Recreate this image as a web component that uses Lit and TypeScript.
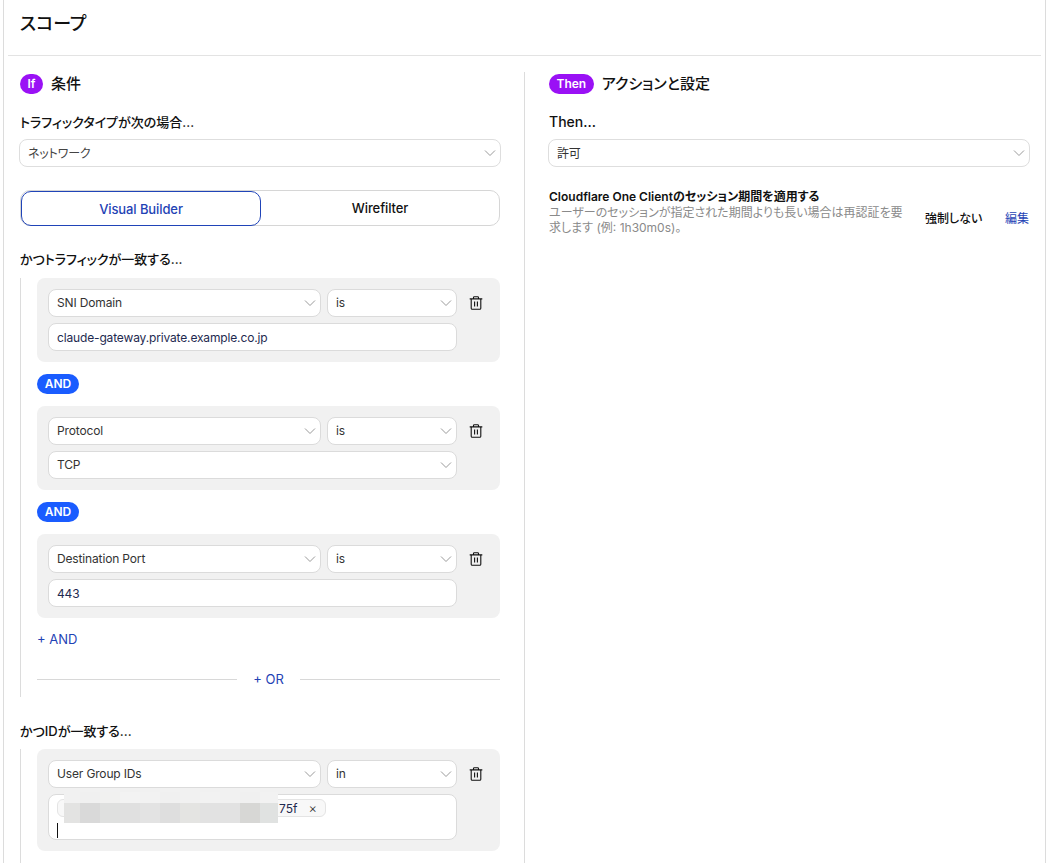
import { LitElement, html, css } from "lit";
import { customElement } from "lit/decorators.js";

const chevron = html`<svg class="chev" width="12" height="12" viewBox="0 0 12 12" fill="none"><path d="M1 3.5 6 8.5 11 3.5" stroke="#9a9a9a" stroke-width="1"/></svg>`;
const trash = html`<svg class="trash" width="14" height="14" viewBox="0 0 14 14" fill="none" stroke="#111" stroke-width="1.1"><path d="M.7 2.9h12.6M2.2 2.9v9.3c0 .7.4 1.1 1.1 1.1h7.4c.7 0 1.1-.4 1.1-1.1V2.9M4.5 2.9V1.6c0-.6.3-.9.9-.9h3.2c.6 0 .9.3.9.9v1.3M5.6 5.6v4.9M8.4 5.6v4.9"/></svg>`;

const blurTop = ["#f1f1f1", "#f0f0f0", "#f1f1f0", "#f3f3f3", "#f2f2f2", "#f0f0f0", "#f1f1f1", "#f2f2f2", "#f1f1f1", "#f0f0f0", "#f2f2f2"];
const blurBottom = ["#e3e3e2", "#d9d9d9", "#dfe0df", "#e0e0e0", "#e3e3e3", "#dedede", "#e4e4e2", "#e2e2e2", "#e2e2e2", "#d7d7d5", "#e0e2e1"];

@customElement("app-root")
export class AppRoot extends LitElement {
  static styles = css`
    :host {
      display: block;
      height: 863px;
      overflow: hidden;
      font-family: Inter, "Noto Sans CJK JP", sans-serif;
      font-feature-settings: "palt";
      color: #111;
      background: #fff;
      padding: 0 3px;
      box-sizing: border-box;
    }
    * { box-sizing: border-box; }
    .card {
      border-left: 1px solid #dcdcdc;
      border-right: 1px solid #dcdcdc;
      width: 1043px;
      height: 863px;
      padding: 0 4px;
    }
    .head {
      height: 56px;
      border-bottom: 1px solid #e3e3e3;
      padding: 10px 12px 0;
      width: 1033px;
    }
    h1 {
      margin: 0;
      font-size: 18px;
      line-height: 27px;
      font-weight: 500;
    }
    .cols { display: flex; }
    .left { width: 492px; padding: 18px 0 0 12px; flex: none; }
    .right {
      flex: 1;
      margin-left: 24px;
      border-left: 1px solid #dcdcdc;
      height: 807px;
      margin-top: 16px;
      padding: 2px 0 0 24px;
      width: 506px;
    }
    .sec { display: flex; align-items: center; height: 20px; gap: 8px; }
    .badge {
      background: #9a11f5;
      color: #fff;
      font-size: 12px;
      font-weight: 600;
      height: 20px;
      line-height: 20px;
      border-radius: 10px;
      padding: 0 7.5px;
    }
    .sec-title { font-size: 15px; font-weight: 500; line-height: 20px; }
    .label { font-size: 13px; font-weight: 500; line-height: 18px; }
    .sel, .inp {
      display: flex;
      align-items: center;
      justify-content: space-between;
      height: 28px;
      background: #fff;
      border: 1px solid #dedede;
      border-radius: 8px;
      padding: 0 4px 0 8px;
      font-size: 12px;
      letter-spacing: -0.15px;
      color: #333;
    }
    .sel span { position: relative; top: -0.5px; }
    .chev { flex: none; }
    .traffic { margin-top: 19px; }
    .traffic .sel { margin: 8px 0 0 -1px; width: 482px; color: #444; }
    .seg {
      display: flex;
      margin-top: 23px;
      height: 36px;
      width: 480px;
      border: 1px solid #d6d6d6;
      border-radius: 10px;
      font-size: 13px;
      letter-spacing: -0.1px;
      font-weight: 500;
    }
    .seg div { display: flex; align-items: center; justify-content: center; }
    .seg .on {
      width: 240px;
      margin: 0 0 -1px 0;
      height: 35px;
      border: 1px solid #2044b8;
      border-radius: 10px;
      color: #1f43b5;
    }
    .seg .off { flex: 1; }
    .match { margin-top: 24px; }
    .group {
      margin-top: 10px;
      border-left: 1px solid #dcdcdc;
      padding-left: 16px;
      width: 480px;
    }
    .rule {
      background: #f1f1f1;
      border-radius: 8px;
      padding: 11px 0 11px 11px;
      display: grid;
      grid-template-columns: 273px 130px 38px;
      grid-auto-rows: 28px;
      column-gap: 6px;
      row-gap: 6px;
    }
    .rule .sel, .rule .inp { border-color: #dbdbdb; padding-left: 8px; }
    .wide { grid-column: 1 / span 2; }
    .inp.val { color: #1e2a50; }
    .trash-cell { display: flex; align-items: center; justify-content: center; padding-right: 13px; }
    .and {
      display: block;
      width: 42px;
      height: 20px;
      margin: 12px 0;
      background: #1a5cff;
      color: #fff;
      border-radius: 10px;
      text-align: center;
      font-size: 12px;
      line-height: 20px;
      font-weight: 600;
    }
    .add-and {
      margin-top: 13px;
      font-size: 13px;
      line-height: 16px;
      color: #1f43b5;
    }
    .or {
      display: flex;
      align-items: center;
      margin-top: 24px;
      padding-bottom: 10px;
      height: 26px;
      font-size: 13px;
      color: #1f43b5;
    }
    .or i { height: 1px; background: #d8d8d8; flex: 1; }
    .or span { width: 63px; text-align: center; line-height: 16px; }
    .id { margin-top: 25px; }
    .group.last { margin-top: 9px; padding-bottom: 30px; }
    .id-box {
      position: relative;
      height: 46px;
      background: #fff;
      border: 1px solid #dbdbdb;
      border-radius: 8px;
      padding: 4px 8px;
      font-size: 13px;
    }
    .rule.tall { grid-template-rows: 28px 46px; }
    .chip {
      display: flex;
      width: 269px;
      height: 18px;
      justify-content: flex-end;
      align-items: center;
      border: 1px solid #e4e4e4;
      background: #f8f8f8;
      border-radius: 6px;
      padding-right: 8px;
      gap: 11px;
      color: #1e2a50;
      font-size: 12px;
    }
    .x { font-size: 13px; font-weight: 300; color: #333; line-height: 12px; }
    .caret { width: 1px; height: 15px; background: #111; margin-top: 6px; }
    .blur {
      position: absolute;
      left: 15px;
      top: -3px;
      width: 214px;
      height: 31px;
      display: grid;
      grid-template-columns: 16px repeat(9, 20px) 18px;
      grid-template-rows: 11px 20px;
    }
    .then-label { margin-top: 19px; font-size: 14px; }
    .then-sel { margin: 8px 0 0 -1px; width: 482px; color: #333; }
    .setting { display: flex; margin-top: 21px; width: 480px; align-items: center; }
    .s-text { width: 362px; flex: none; }
    .s-title { font-size: 12px; font-weight: 600; line-height: 17px; }
    .s-desc { font-size: 12px; line-height: 15px; color: #8a8a8a; }
    .s-val { margin-left: 14px; font-size: 12px; font-weight: 500; padding-top: 12px; }
    .s-edit { margin-left: auto; font-size: 12px; color: #1f43b5; padding-top: 12px; }
  `;

  private rule(name: string, op: string, value: unknown, mode: "input" | "select") {
    return html`<div class="rule">
      <div class="sel"><span>${name}</span>${chevron}</div>
      <div class="sel"><span>${op}</span>${chevron}</div>
      <div class="trash-cell">${trash}</div>
      ${mode === "input"
        ? html`<div class="inp val wide">${value}</div>`
        : html`<div class="sel wide"><span>${value}</span>${chevron}</div>`}
    </div>`;
  }

  render() {
    return html`<div class="card">
      <div class="head"><h1>スコープ</h1></div>
      <div class="cols">
        <div class="left">
          <div class="sec"><span class="badge">If</span><span class="sec-title">条件</span></div>
          <div class="traffic">
            <div class="label">トラフィックタイプが次の場合...</div>
            <div class="sel"><span>ネットワーク</span>${chevron}</div>
          </div>
          <div class="seg"><div class="on">Visual Builder</div><div class="off">Wirefilter</div></div>
          <div class="match label">かつトラフィックが一致する...</div>
          <div class="group">
            ${this.rule("SNI Domain", "is", "claude-gateway.private.example.co.jp", "input")}
            <span class="and">AND</span>
            ${this.rule("Protocol", "is", "TCP", "select")}
            <span class="and">AND</span>
            ${this.rule("Destination Port", "is", "443", "input")}
            <div class="add-and">+ AND</div>
            <div class="or"><i></i><span>+ OR</span><i></i></div>
          </div>
          <div class="id label">かつIDが一致する...</div>
          <div class="group last">
            <div class="rule tall">
              <div class="sel"><span>User Group IDs</span>${chevron}</div>
              <div class="sel"><span>in</span>${chevron}</div>
              <div class="trash-cell">${trash}</div>
              <div class="id-box wide">
                <div class="chip"><span>75f</span><span class="x">×</span></div>
                <div class="caret"></div>
                <div class="blur">
                  ${blurTop.map((c) => html`<div style="background:${c}"></div>`)}
                  ${blurBottom.map((c) => html`<div style="background:${c}"></div>`)}
                </div>
              </div>
            </div>
          </div>
        </div>
        <div class="right">
          <div class="sec"><span class="badge">Then</span><span class="sec-title">アクションと設定</span></div>
          <div class="then-label label">Then...</div>
          <div class="sel then-sel"><span>許可</span>${chevron}</div>
          <div class="setting">
            <div class="s-text">
              <div class="s-title">Cloudflare One Clientのセッション期間を適用する</div>
              <div class="s-desc">ユーザーのセッションが指定された期間よりも長い場合は再認証を要求します (例: 1h30m0s)。</div>
            </div>
            <div class="s-val">強制しない</div>
            <div class="s-edit">編集</div>
          </div>
        </div>
      </div>
    </div>`;
  }
}
